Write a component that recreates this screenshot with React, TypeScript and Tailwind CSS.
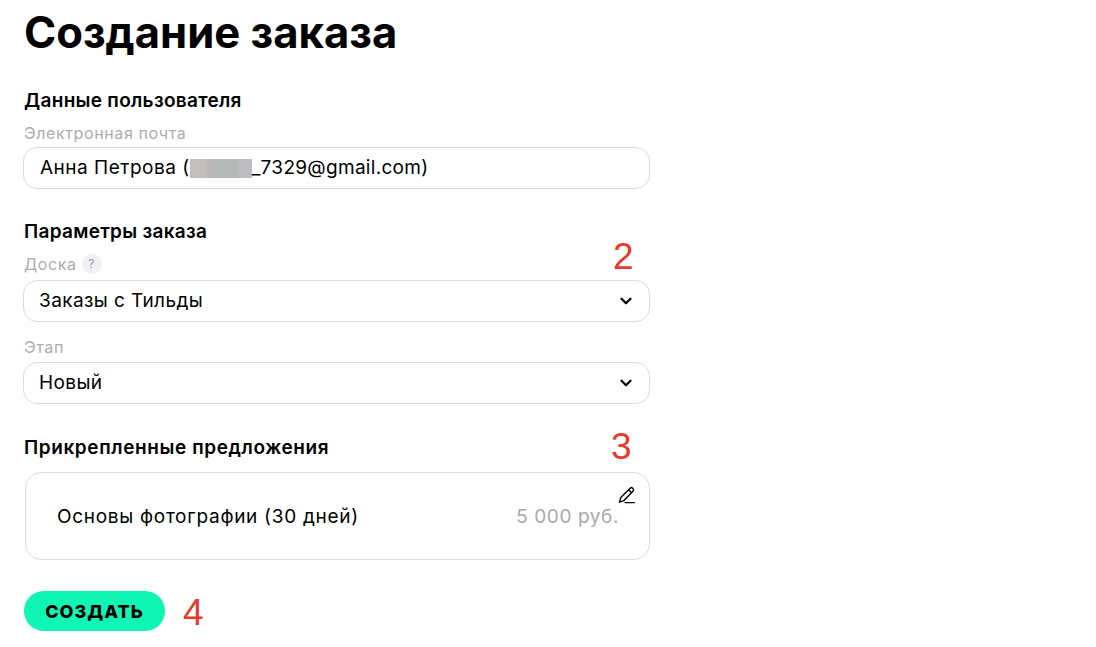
import { ChevronDown } from "lucide-react";

const font = { fontFamily: '"Inter", "Noto Sans", sans-serif' };

function SelectField({ value }: { value: string }) {
  return (
    <div className="flex h-[42px] w-[627px] items-center justify-between rounded-[14px] border border-[#dcdcdc] bg-white pl-[15px] pr-[14px] text-[19px] tracking-[0.4px] text-black">
      <span>{value}</span>
      <ChevronDown size={18} strokeWidth={3} className="text-black" />
    </div>
  );
}

function Mark({ n, className }: { n: string; className: string }) {
  return (
    <span className={`absolute font-['Liberation_Sans',sans-serif] text-[37px] leading-none text-[#e8392f] ${className}`}>
      {n}
    </span>
  );
}

export default function App() {
  return (
    <div className="relative h-[647px] w-[1096px] overflow-hidden bg-white pl-[24px]" style={font}>
      <h1 className="pt-[8px] text-[43.6px] font-bold leading-[50px] text-black">Создание заказа</h1>

      <h2 className="mt-[31px] text-[19px] font-semibold leading-[24px] tracking-[0.3px] text-black">Данные пользователя</h2>
      <div className="mt-[10px] text-[16px] leading-[20px] tracking-[0.6px] text-[#adadad]">Электронная почта</div>
      <div className="-ml-[1px] mt-[4px] flex h-[42px] w-[627px] items-center rounded-[14px] border border-[#dcdcdc] pl-[16px] text-[19px] tracking-[0.5px] text-black">
        <span>Анна Петрова (</span>
        <span className="flex h-[19px] w-[62px]">
          <span className="w-[17px] bg-[#c4bdbb]" />
          <span className="w-[32px] bg-[#b7b9b8]" />
          <span className="w-[13px] bg-[#bcbdc1]" />
        </span>
        <span className="tracking-[0.3px]">_7329@gmail.com)</span>
      </div>

      <h2 className="mt-[31px] text-[19px] font-semibold leading-[24px] tracking-[0.3px] text-black">Параметры заказа</h2>
      <div className="mt-[10px] flex h-[20px] items-center gap-[5px] text-[16px] tracking-[0.6px] text-[#adadad]">
        <span>Доска</span>
        <span className="flex h-[20px] w-[20px] items-center justify-center rounded-full bg-[#f0f1f2] text-[12px] text-[#9a9a9a]">?</span>
      </div>
      <div className="-ml-[1px] mt-[6px]">
        <SelectField value="Заказы с Тильды" />
      </div>
      <div className="mt-[15px] text-[16px] leading-[20px] tracking-[0.6px] text-[#adadad]">Этап</div>
      <div className="-ml-[1px] mt-[5px]">
        <SelectField value="Новый" />
      </div>

      <h2 className="mt-[32px] text-[19px] font-semibold leading-[24px] tracking-[0.6px] text-black">Прикрепленные предложения</h2>
      <div className="relative ml-[1px] mt-[12px] flex h-[88px] w-[625px] items-center justify-between rounded-[16px] border border-[#dcdcdc] pl-[31px] pr-[30px] pt-[3px]">
        <span className="text-[19px] tracking-[0.7px] text-black">Основы фотографии (30 дней)</span>
        <span className="text-[19px] tracking-[0.6px] text-[#a9a9a9]">5 000 руб.</span>
        <svg className="absolute right-[12px] top-[13px]" width="20" height="18" viewBox="0 0 20 18" fill="none" stroke="#000" strokeWidth="1.4" strokeLinejoin="round" strokeLinecap="round">
          <path d="M13.2 2.2a1.7 1.7 0 0 1 2.4 0l.5.5a1.7 1.7 0 0 1 0 2.4L7 14.6l-4.6 1.6 1.4-4.6z" />
          <path d="M11.6 3.8l2.9 2.9" />
          <path d="M8 16.6h9.5" />
        </svg>
      </div>

      <button className="mt-[31px] flex h-[40px] w-[141px] items-center justify-center rounded-full bg-[#0ff5b3] text-[18px] font-extrabold tracking-[1px] text-black">
        СОЗДАТЬ
      </button>

      <Mark n="2" className="left-[613px] top-[238px]" />
      <Mark n="3" className="left-[611px] top-[428px]" />
      <Mark n="4" className="left-[183px] top-[594px]" />
    </div>
  );
}
